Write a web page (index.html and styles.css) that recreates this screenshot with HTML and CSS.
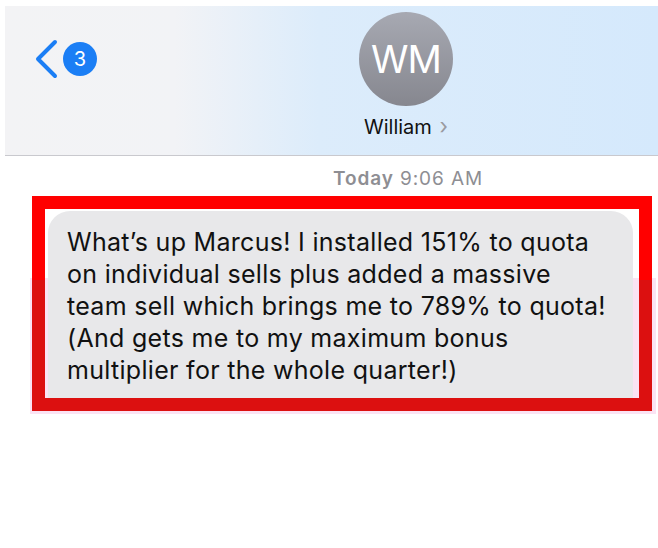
FILE: index.html
```html
<!DOCTYPE html>
<html lang="en">
<head>
    <meta charset="UTF-8">
    <meta name="viewport" content="width=device-width, initial-scale=1.0">
    <title>Messages - William</title>
    <link rel="stylesheet" href="styles.css">
</head>
<body>
    <div class="header">
        <div class="back">
            <svg class="chevron" width="24" height="40" viewBox="0 0 24 40">
                <path d="M20 3 L3 20 L20 37" fill="none" stroke="#1b7ef5" stroke-width="4" stroke-linecap="round" stroke-linejoin="round"/>
            </svg>
            <span class="badge">3</span>
        </div>
        <div class="contact">
            <div class="avatar">WM</div>
            <div class="name">William <span class="name-arrow">&rsaquo;</span></div>
        </div>
    </div>

    <div class="thread">
        <div class="stamp"><b>Today</b> 9:06 AM</div>
        <div class="tint"></div>
        <div class="highlight">
            <div class="bubble">What’s up Marcus! I installed 151% to quota<br>
                on individual sells plus added a massive<br>
                team sell which brings me to 789% to quota!<br>
                (And gets me to my maximum bonus<br>
                multiplier for the whole quarter!)</div>
        </div>
    </div>
</body>
</html>
```

FILE: styles.css
```css
body {
    margin: 0;
    background: #fff;
    font-family: Inter, "Liberation Sans", Arial, sans-serif;
    width: 658px;
    height: 548px;
    overflow: hidden;
}

.header {
    margin: 6px 0 0 5px;
    height: 149px;
    border-bottom: 1px solid #c9c9ce;
    background: linear-gradient(90deg, #f3f3f5 0%, #f2f3f6 26%, #dcecfb 48%, #d5e9fc 100%);
    display: flex;
    position: relative;
}

.back {
    position: absolute;
    left: 30px;
    top: 33px;
    display: flex;
    align-items: center;
}

.badge {
    width: 34px;
    height: 34px;
    border-radius: 50%;
    background: #1b7ef5;
    color: #fff;
    font-size: 20px;
    display: flex;
    align-items: center;
    justify-content: center;
    margin-left: 4px;
}

.contact {
    margin-left: 354px;
    padding-top: 6px;
    display: flex;
    flex-direction: column;
    align-items: center;
    width: 94px;
}

.avatar {
    width: 94px;
    height: 94px;
    border-radius: 50%;
    background: linear-gradient(180deg, #a7a9b2 0%, #86878f 100%);
    color: #fff;
    font-size: 38px;
    display: flex;
    align-items: center;
    justify-content: center;
    letter-spacing: -1px;
}

.name {
    margin-top: 7px;
    font-size: 20px;
    color: #111;
    white-space: nowrap;
}

.name-arrow {
    color: #9a9aa0;
    font-size: 22px;
    margin-left: 2px;
}

.thread {
    position: relative;
    padding-top: 11px;
}

.stamp {
    margin-left: 333px;
    font-size: 19px;
    letter-spacing: 0.9px;
    color: #8e8e93;
}

.stamp b {
    font-weight: 600;
}

.highlight {
    position: relative;
    margin: 6px 0 0 32px;
    width: 591px;
    border: 13px solid #ff0000;
    border-image: linear-gradient(180deg, #ff0000 0, #ff0000 84px, #dc1010 84px, #dc1010 100%) 13;
    padding: 2px 0 0 3px;
}

.bubble {
    background: #e8e8ea;
    border-radius: 22px 22px 0 0;
    padding: 15px 0 12px 19px;
    margin-right: 6px;
    font-size: 25px;
    letter-spacing: 0.3px;
    line-height: 32px;
    color: #111;
    white-space: nowrap;
}

.tint {
    position: absolute;
    left: 30px;
    top: 122px;
    width: 626px;
    height: 136px;
    background: #fbe3f3;
}
```
